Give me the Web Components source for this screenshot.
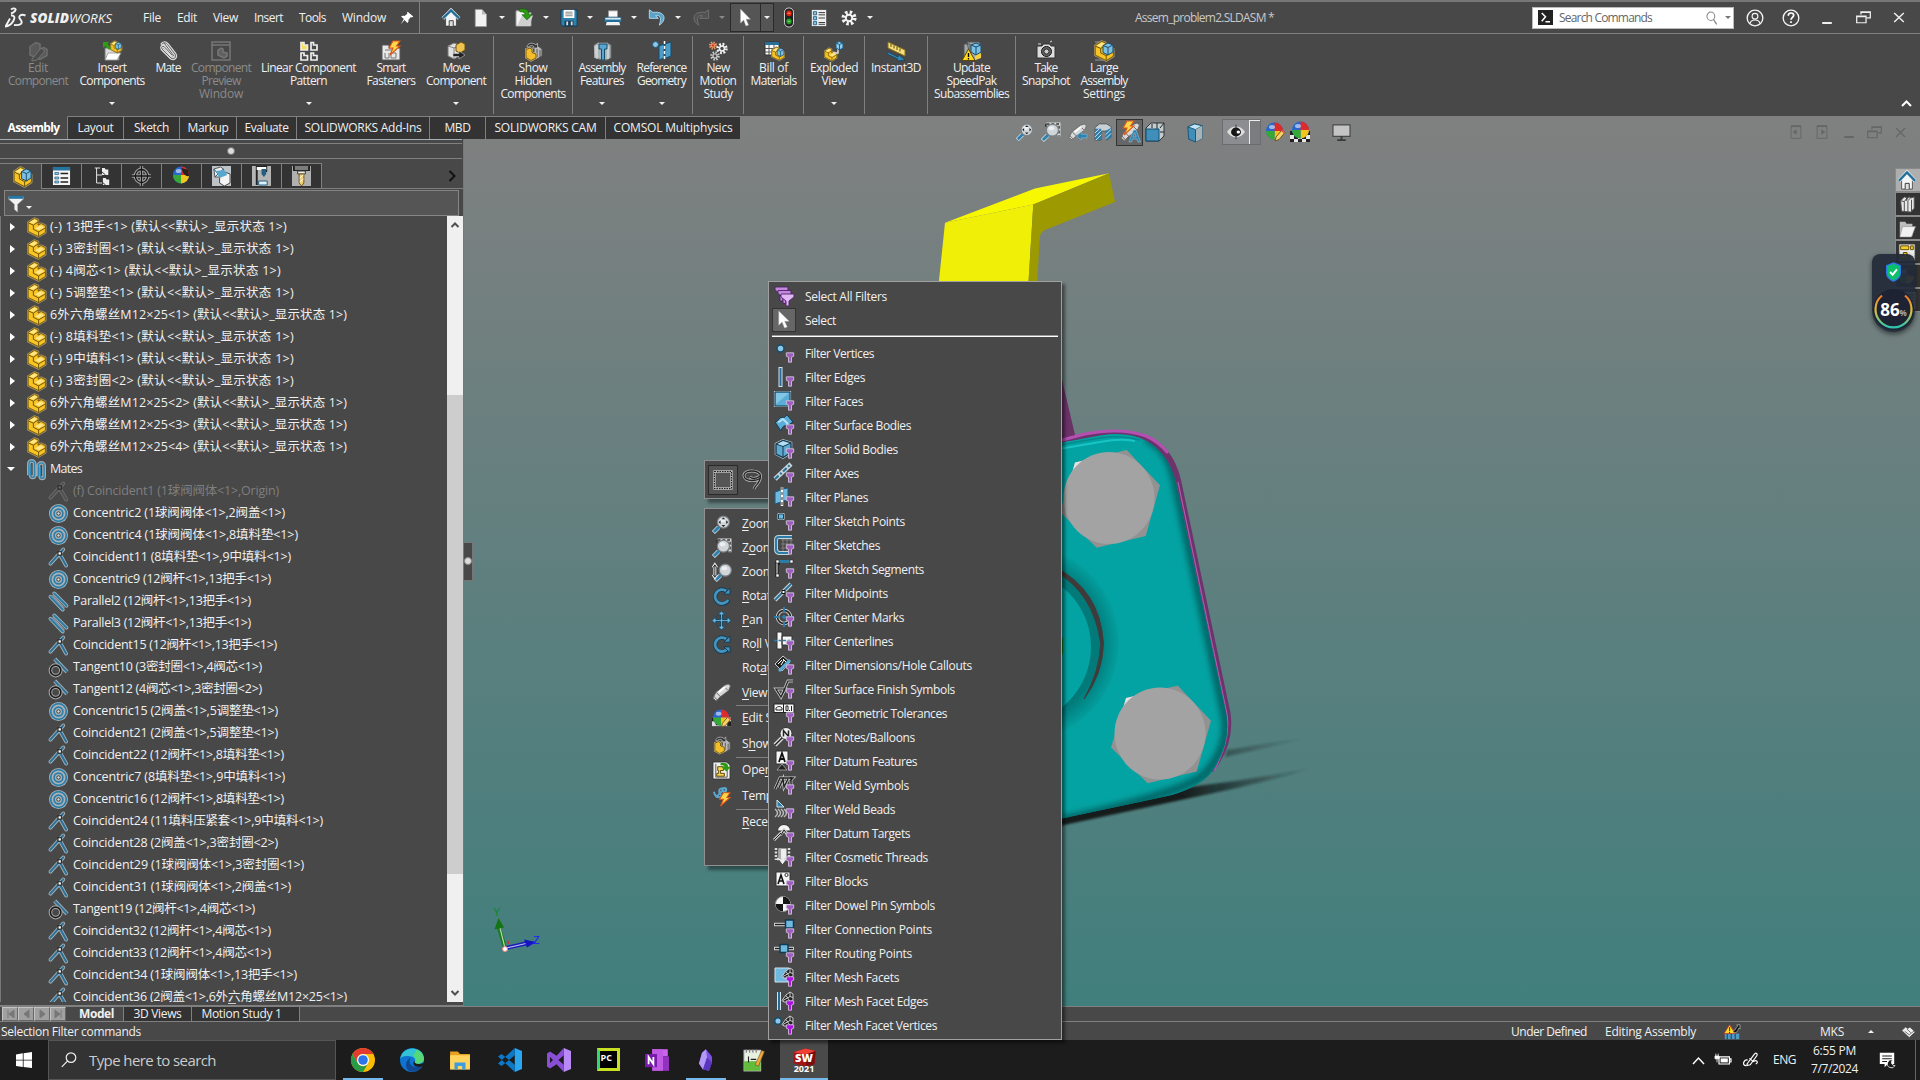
<!DOCTYPE html>
<html lang="en">
<head>
<meta charset="utf-8">
<title>SOLIDWORKS - Assem_problem2.SLDASM</title>
<style>
html,body{margin:0;height:100%;overflow:hidden;background:#484848}
body{font:12px/16px "Open Sans","Noto Sans","Noto Sans CJK SC",sans-serif;color:#f0f0f0}
</style>
</head>
<body>
<sw-app></sw-app>
<script>
const B='#2f86b4', L='#8cc8e6', D='#123a52';
const fun=(c='#a05fbe')=>`<path d="M12.3 9.800h7.400v3.400l-2.200 1v5h-3v-5l-2.200-1z" fill="${c}" stroke="#d8d0dc" stroke-width=".8"/>`;
const part=`<g transform="translate(-1 -1.300) scale(1.100)"><path d="M2 5.500 8 1.500 11.500 3v5l3-1.500 4 2v6.500L12 19 2 14z" fill="#f7c325" stroke="#a8946a" stroke-width="2.200" stroke-linejoin="round"/><path d="M2 5.500 8 1.500 11.500 3v5l3-1.500 4 2v6.500L12 19 2 14z" fill="#f7c325" stroke="#6b5200" stroke-width=".8"/><path d="M2.500 6 7 8v4l5 2.500V19M7 8l4.500-3M12 14.500l6-3.500" fill="none" stroke="#6b5200" stroke-width=".9"/><path d="M3 5.500 8 2.500l3 1.200-4 3zM8.500 11l5.500-3 3.500 2-5 3z" fill="#ffe68a"/></g>`;
const partBlue=part+`<path d="M9 4.500 14 2l5 2v7l-5 3-5-2.500z" fill="#7cc0e4" stroke="#1b4c6b"/><path d="M9 4.500l5 2 5-2.500M14 6.500V14" fill="none" stroke="#1b4c6b"/>`;
const mag=`<path d="M1.500 18.500 7 13" stroke="#d8e8f0" stroke-width="4.500"/><path d="M2 18 7.500 12.500" stroke="#2f7fae" stroke-width="3"/><circle cx="12" cy="7.500" r="6.300" fill="#cfd5d9" stroke="#7b8286" stroke-width="1.200"/><ellipse cx="11" cy="5.500" rx="3" ry="2.200" fill="#fff" opacity=".6"/>`;
const ball=`<circle cx="9.500" cy="9" r="8.500" fill="#2a66cc"/><path d="M9.500 .5A8.500 8.500 0 0 1 18 9H9.500z" fill="#dd2a2a"/><path d="M18 9a8.500 8.500 0 0 1-8.500 8.500V9z" fill="#f2c51e"/><path d="M1 9a8.500 8.500 0 0 0 8.500 8.500V9z" fill="#35a835"/><ellipse cx="7" cy="5" rx="3" ry="2" fill="#fff" opacity=".55"/>`;
const pencil=`<path d="M10 19l1-4 6-7 3 2.500-6 7z" fill="#f5d36b" stroke="#6a4d18" stroke-width=".9"/><path d="M16 9l3 2.500 1-1.300-2.800-2.500z" fill="#d55"/>`;
const bolt=(x=0,y=0)=>`<path transform="translate(${x} ${y})" d="M7 0h7l-3.500 5H14L4 14l3-7H3z" fill="#ffd84a" stroke="#d9571a" stroke-width="1.100"/>`;
const scope=`<path d="M1 16 4 10l9-7.500 4-1.500 2.500 2-2 5-9.500 7-3.500 4z" fill="#d8d8d8" stroke="#606060" stroke-width=".9"/><path d="M4.500 10l5 5M12 3l5 5M2 14l3.500 4" stroke="#666"/><path d="M7 10l7-6" stroke="#fff" stroke-width="2"/>`;
const cube=`<path d="M2 5 9 1.500 17 4v9.500L9 18.500 2 15z" fill="#5fa9d0" stroke="#b8c6cd" stroke-width="2.600"/><path d="M2 5 9 1.500 17 4v9.500L9 18.500 2 15z" fill="#5fa9d0" stroke="${D}" stroke-width="1.300"/><path d="M2 5l7 2.500L17 4 9 1.500z" fill="#b4def2" stroke="${D}"/><path d="M9 7.500v11" stroke="${D}"/>`;
const doc=`<path d="M3 .5h9l6 5.500v13.500H3z" fill="#f2f2f2" stroke="#999"/><path d="M12 1v5h5z" fill="#bbb"/>`;
const house=`<path d="M4 9v10h12V9l-6-6z" fill="#f4f4f4" stroke="#333" stroke-width=".8"/><path d="M1 10.500 10 1.500l9 9" fill="none" stroke="#e9f4fa" stroke-width="4"/><path d="M1 10.500 10 1.500l9 9" fill="none" stroke="#236d96" stroke-width="2.600"/><path d="M8 19v-6h4.500v6" fill="#ddd" stroke="#333"/>`;
const folder=`<path d="M2 3h6l1.500 2H16v13H2z" fill="#bdbdbd"/><path d="M5 8h14.500L15 19H2z" fill="#f1f1f1" stroke="#888" stroke-width=".6"/>`;
const gear=(x,y,r,c,h='#484848')=>`<circle cx="${x}" cy="${y}" r="${r}" fill="none" stroke="${c}" stroke-width="${r*.7}" stroke-dasharray="${r*.42} ${r*.365}"/><circle cx="${x}" cy="${y}" r="${r*.75}" fill="${c}"/><circle cx="${x}" cy="${y}" r="${r*.4}" fill="${h}"/>`;
const meshPart=`<path d="M8 9.500 12 4l4-3 3 2v6l-3 2H10z" fill="#222" stroke="#ddd" stroke-width=".9"/><path d="M9 9.500l7-4V1M12 4.500l4 6M16 5.500l3 1" stroke="#ddd" fill="none" stroke-width=".9"/>`;
const hide=`<g fill="#bbb" stroke="#555"><path d="M11 7l4-2 4 3v7l-5 3-3-3z"/><path d="M14 8v8M17 9v7"/></g><path d="M3 8.500 7 7l2 1.500v3l4 1.500v4l-5 2.500-5-3z" fill="#f4bd2c" stroke="#c9b98a" stroke-width="2"/><path d="M3 8.500 7 7l2 1.500v3l4 1.500v4l-5 2.500-5-3z" fill="#f4bd2c" stroke="#5f4600" stroke-width=".8"/><path d="M4 6c0-4 6-5 9-2l1.500-2v5H9.500L11 5.500C9 4 6 4.500 6 6z" fill="#333" stroke="#bbb" stroke-width=".8"/>`;
const rot=(c)=>`<path d="M17.500 13.500A7.500 7.500 0 1 1 15 4" fill="none" stroke="${D}" stroke-width="4.600"/><path d="M17 13.500A7.300 7.300 0 1 1 15 4.200" fill="none" stroke="#4593bd" stroke-width="3"/><path d="M12.500 7.500h6.500V1z" fill="#4593bd" stroke="${D}"/>${c}`;
const I={
home:house, doc,
open:`<path d="M2 3h6l2 2h7v14H2z" fill="#f4f4f4" stroke="#999"/><path d="M8 8h11l-4 11H3z" fill="#cfcfcf"/><path d="M5 1h4c4 0 6 2 6 6h3l-5 5.500L8 7h3c0-2-1-3-5-3z" fill="#2c9a12" stroke="#125a05" stroke-width=".6"/>`,
save:`<path d="M1 1h18v18H3l-2-2z" fill="#2f80ae" stroke="${D}"/><path d="M4 1h12v9H4z" fill="#fff"/><path d="M6 3.500h8M6 5.500h8M6 7.500h8" stroke="#777"/><path d="M5 13h10v6H5z" fill="#173d54"/><path d="M7 14h2v4H7zM12 14h2v4h-2z" fill="#ddd"/>`,
print:`<path d="M5 1h10v9H5z" fill="#fafafa" stroke="#999"/><path d="M1 9h18v6H1z" fill="#d5e9f4" stroke="#175272"/><path d="M1.500 12h17v3h-17z" fill="#1f6d98"/><path d="M3 15h14l1 4H2z" fill="#f2f2f2"/>`,
undo:`<path d="M1.500 1v10h10L8.500 8c5-1 7 2 4 11 8-5 8-17-7-15z" fill="#5ba2c9" stroke="#b9dff2"/>`,
redo:`<path d="M18.500 1v10h-10l3-3c-5-1-7 2-4 11-8-5-8-17 7-15z" fill="#525252" stroke="#757575"/>`,
cursor:`<path d="M5 1v15l3.500-3.500L11 19l3-1.200-2.800-6H16z" fill="#fff" stroke="#aaa" stroke-width=".5"/>`,
traffic:`<rect x="5" y="0" width="10" height="20" rx="4.500" fill="#222" stroke="#ddd"/><circle cx="10" cy="5.500" r="3" fill="#e2210c"/><circle cx="10" cy="14" r="3" fill="#1fa01f"/><path d="M8.500 5.500h3M8.500 14h3" stroke="#fff" opacity=".6"/>`,
list:`<rect x="1" y="1" width="18" height="18" fill="#eee"/><path d="M3 3h4v3.500H3zM3 8.500h4V12H3zM3 14h4v3.500H3z" fill="#8bc6e6" stroke="#1e597c"/><path d="M9.500 4h8M9.500 6.500h8M9.500 10h8M9.500 15h8M9.500 17h8" stroke="#222"/>`,
gear:gear(10,10,7,'#f4f4f4'),
pin:`<path d="M11 1l8 7-2 1.200-1.500-.5-3.500 4c.5 2 0 3-1.500 4.300L6.500 13 1 19l4.500-7.500L1.500 8C3 6.500 4.500 6.500 6.500 7.200L10.500 4 10 2.500z" fill="#fff"/>`,
editc:`<g opacity=".38"><path d="M2 5.500 8 1.500 12 3v5l4-1.500 3 2v6L12 18.500 2 14z" fill="#777" stroke="#aaa" stroke-width="1.500"/><path d="M4 18l9-11 4 3-8 9-5 1z" fill="#555" stroke="#bbb"/></g>`,
insertc:`<path d="M3 7h6l1 2h7v10H3z" fill="#ddd" stroke="#777"/><path d="M6 12h13l-4 7H3z" fill="#fff" stroke="#888" stroke-width=".7"/><g transform="translate(8 0) scale(.6)">${partBlue}</g><path d="M1 1h6L5.500 3 9 7 7 9 3.500 5 1 7z" fill="#2d9e13"/>`,
mate:`<g fill="none" stroke-linecap="round"><path d="M4 3c3-3 5 0 6 1l7 9c2 3-1 6-4 4L4 8C3 6 4 5 6 5.500l8 8.500M6 2l10 13" stroke="#ddd" stroke-width="3"/><path d="M4 3c3-3 5 0 6 1l7 9c2 3-1 6-4 4L4 8C3 6 4 5 6 5.500l8 8.500M6 2l10 13" stroke="#666" stroke-width="1"/></g>`,
preview:`<g opacity=".4" fill="none" stroke="#bbb" stroke-width="1.500"><path d="M1 1h18v18H1zM1 4h18"/><path d="M7 9l3-2 2 1v3l4 1v3l-3 2-6-3z" fill="#888"/></g>`,
linear:`<g fill="none" stroke="#eee" stroke-width="1.700"><path d="M2 1.500h3v2.500h3.500V9H2z" fill="#f6df5c"/><path d="M12 1.500h2.500V4H18v5h-6zM2 12h3v2.500h3.500V19H2zM12 12h2.500v2.500H18V19h-6z"/></g>`,
smart:`<path d="M1 4h7v3h11v12H1z" fill="#e8e8e8" stroke="#555"/><path d="M4 9h10M4 12v5h4v-5M10 12h5v5h-5z" stroke="#777" fill="none"/>${bolt(5,0)}`,
move:`<path d="M2 5 8 2l6 2v11l-6 3-6-3z" fill="#e1e1e1" stroke="#777"/><path d="M8 6v12M2 5l6 2 6-2" stroke="#888" fill="none"/><path d="M10 4l5-3 4 2v6l-5 3-4-2z" fill="#f0c34e" stroke="#6b5314"/><path d="M7 12.500h6v-2.500l6 4-6 4v-2.500H7z" fill="#222" stroke="#ddd" stroke-width=".5"/>`,
hide, asmf:`<path d="M2 4l4-2.500h9L19 4v13l-4 2h-5l-7-2z" fill="#a9b4ba" stroke="#666"/><path d="M3 5v12M5 4v14M16 5v13" stroke="#eee"/><path d="M7 3h8v5h-2.500v11h-3V8H7z" fill="#5aa5cf" stroke="#174d6c"/>`,
refg:`<path d="M7 5l5-2v14l-5 2zM13 3l6-2v14l-6 2.500z" fill="#4d9cc8" stroke="#174d6c"/><path d="M12.500 0v20" stroke="#fff" stroke-dasharray="3 2" stroke-width="1.500"/><circle cx="3.500" cy="3.500" r="3" fill="#8cc8e6" stroke="#1d587a"/>`,
motion:gear(5,4.500,3,'#f29c63','#e33')+gear(14,7.500,4.200,'#f3f3f3')+gear(7,15,3.500,'#c9c9c9'),
bom:`<path d="M1 1h14v13H1z" fill="#fff" stroke="#333"/><path d="M1 1h14v3H1z" fill="#256f9a"/><path d="M1 7.500h14M1 11h14M5 4v10M10 4v10" stroke="#555"/><g transform="translate(7 6) scale(.68)">${partBlue}</g>`,
expl:`<g transform="translate(0 7) scale(.65)">${part}</g><path d="M9 12h5V7" fill="none" stroke="#ddd" stroke-width="1.500"/><path d="M12 2l3-1.500L19 2v5l-3.500 2L12 7z" fill="#8fcbeb" stroke="#1d5c83"/><path d="M12 2l3.500 1.500L19 2M15.500 3.500V9" stroke="#1d5c83" fill="none"/>`,
i3d:`<path d="M2 1l17 8v6L2 7z" fill="#f7e07a" stroke="#8a7020"/><path d="M5 3v3M8 4.500v3M11 6v3M14 7.500v3" stroke="#5a4710"/><path d="M2 11l10 5 1-2 6 5-8 1 .8-2L1 13z" fill="#2d86b6" stroke="${D}" stroke-width=".6"/>`,
speed:`<path d="M2 3h6v13H2zM5 1h12l2 3v12l-4 3H9z" fill="#a0a8ac" stroke="#555"/><path d="M9 4l5-2 5 2v7l-5 3-5-3z" fill="#7cc0e4" stroke="#1b4c6b"/><path d="M9 4l5 2 5-2M14 6v8" fill="none" stroke="#1b4c6b"/><path d="M13 15l6-3v5l-6 2z" fill="#f6d040"/><path d="M6.500 8 13 19.500H0z" fill="#ffd91e" stroke="#5f4600"/><path d="M6.500 12v4M6.500 17v1.500" stroke="#000" stroke-width="1.400"/>`,
snap:`<path d="M1 5h5l1.500-2h6L15 5h4v12H1z" fill="#ddd" stroke="#333"/><circle cx="10.500" cy="10.500" r="5" fill="#666" stroke="#111"/><circle cx="10.500" cy="10.500" r="2.600" fill="#ccc" stroke="#222"/><path d="M2 3h3M14 1l2-1" stroke="#ddd"/>`,
large:`<path d="M1 1h11M1 19h13" stroke="#999"/>`+partBlue,
asm:partBlue, part,
tree1:`<path d="M1 1h18v18H1z" fill="#f5f5f5"/><path d="M1 1h18v3.500H1z" fill="#2674a0"/><path d="M3 6.500h4v2H3zM3 11h4v2H3zM3 15h4v2H3z" fill="#8bc6e6" stroke="#1e597c" stroke-width=".7"/><path d="M9 7.500h8M9 12h8M9 16h8" stroke="#222" stroke-width="1.300"/>`,
tree2:`<g stroke="#eee" fill="none"><path d="M2 2h6M4 2v15h6M4 9h6"/></g><path d="M10 2h3l1 1.500h3V9h-7zM11 12h3l1 1.500h3V19h-7z" fill="#eee"/><path d="M10 6l4 3M10 16l4 3" stroke="#333"/>`,
target:`<g fill="none" stroke="#a0a0a0" stroke-width="3.600"><circle cx="10" cy="10" r="6.500"/><path d="M10 0v20M0 10h20"/></g><g fill="none" stroke="#161616" stroke-width="1.300"><circle cx="10" cy="10" r="6.500"/><path d="M10 0v20M0 10h20"/></g>`,
ball:ball+`<path d="M10 2l7 2 1 6c-4 1-7-3-8-8z" fill="#222"/>`, disp:`<rect width="20" height="20" fill="#bdc3c6"/><path d="M2 3l7-2 3 2v8H3z" fill="#eee" stroke="#555"/><path d="M2 3l8 9M3 11l9-8" stroke="#1d5c83"/><path d="M8 8l5-2 6 2v9l-6 3-5-3z" fill="#f4f4f4" stroke="#444"/><path d="M4 5l9-1 3 5-8 3z" fill="#57a7cf"/>`,
cam:`<rect width="20" height="20" fill="#b4b4b4"/><path d="M5 19V1h10v5" fill="none" stroke="#222" stroke-width="2"/><path d="M5 1h10v3H5z" fill="#fff"/><path d="M10 3h5v5l-2.500 3L10 8z" fill="#235f83"/><path d="M7 15h9v4H7z" fill="#dff0f8" stroke="#235f83"/>`,
drill:`<rect width="20" height="20" fill="#b0b0b0"/><path d="M1 0h18v5H1z" fill="#222"/><path d="M3 1h14M3 3h14" stroke="#ddd"/><path d="M6 5h8v3H6z" fill="#eee" stroke="#333"/><path d="M7.500 8h5v9l-2.500 3-2.500-3z" fill="#f1cf6f" stroke="#755618"/><path d="M8 12l4-3M8 16l4-3" stroke="#fff"/>`,
filter:`<path d="M1 2h18v3l-7 6v9l-4-3v-6L1 5z" fill="#f2f2f2" stroke="#aaa" stroke-width=".7"/><path d="M1 1h18v3.500H1z" fill="#2476a3"/>`,
mates:`<g fill="none" stroke="#a4acb0" stroke-width="4"><path d="M2 16V4c0-4 6-4 6 0v12c0 3-4 3-4 0M12 17V6c0-4 6-4 6 0v11c0 3-4 3-4 0"/></g><g fill="none" stroke="#2f86b4" stroke-width="1.500"><path d="M2 16V4c0-4 6-4 6 0v12c0 3-4 3-4 0V5M12 17V6c0-4 6-4 6 0v11c0 3-4 3-4 0V7"/></g>`,
coin:`<g stroke-linecap="round"><path d="M1.500 16.500 15 1.500M11 6l7 12.500" stroke="#a9b2b7" stroke-width="4"/><path d="M1.500 16.500 15 1.500M11 6l7 12.500" stroke="#2b7299" stroke-width="2.200"/></g><rect x="9.500" y="4" width="3.500" height="3.500" fill="#fff" stroke="#111"/>`,
coinoff:`<g stroke-linecap="round"><path d="M1.500 16.500 15 1.500M11 6l7 12.500" stroke="#707070" stroke-width="4"/><path d="M1.500 16.500 15 1.500M11 6l7 12.500" stroke="#505050" stroke-width="2.200"/></g><rect x="9.500" y="4" width="3.500" height="3.500" fill="#666" stroke="#222"/>`,
conc:`<circle cx="10" cy="10" r="10" fill="#a9b2b7"/><g fill="none" stroke="#2b7da8"><circle cx="10" cy="10" r="8.200" stroke-width="1.800"/><circle cx="10" cy="10" r="4.600" stroke-width="1.800"/></g><circle cx="10" cy="10" r="1.800" fill="#ddd" stroke="#333"/>`,
par:`<g stroke-linecap="round"><path d="M1.500 5l13 13.500M5.500 1.500l13 13" stroke="#a9b2b7" stroke-width="4"/><path d="M1.500 5l13 13.500M5.500 1.500l13 13" stroke="#2b7da8" stroke-width="2.200"/><path d="M4 3.500l12 13" stroke="#ccd" stroke-width=".8"/></g>`,
tan:`<path d="M6 1l13 13.500" stroke="#a9b2b7" stroke-width="4.200"/><path d="M6 1l13 13.500" stroke="#2b7299" stroke-width="2.200"/><circle cx="7" cy="13" r="5.500" fill="none" stroke="#aaa" stroke-width="3.800"/><circle cx="7" cy="13" r="5.500" fill="none" stroke="#1d1d1d" stroke-width="1.700"/>`,
zfit:mag+`<path d="M12 2.500l2 2h-4zM12 12.500l2-2h-4zM7 7.500l2-2v4zM17 7.500l-2-2v4z" fill="#222"/>`,
zarea:`<path d="M6 1h13v13" fill="none" stroke="#ddd" stroke-width="3"/><path d="M6 1h13v13M5 1v3" fill="none" stroke="#333" stroke-width="1.500" stroke-dasharray="3 2"/>`+mag,
zio:`<g transform="translate(2 0)">${mag}</g><path d="M3 3v11M1 5l2-3 2 3M1 12l2 3 2-3" fill="none" stroke="#eee" stroke-width="3"/><path d="M3 2v12M1 5l2-3 2 3M1 12l2 3 2-3" fill="none" stroke="#222"/>`,
rot:rot(''), roll:rot(`<path d="M12.500 12.500h6.500V19z" fill="#4593bd" stroke="${D}"/>`),
pan:`<path d="M10 0l4 4h-3v5h5V6l4 4-4 4v-3h-5v5h3l-4 4-4-4h3v-5H4v3l-4-4 4-4v3h5V4H6z" fill="#6ab4dc" stroke="#12435f"/>`,
scope, prev:scope+`<path d="M9 14.500l5-4.500v2.500h6v4h-6v2.500z" fill="#2e83b3" stroke="#8fcbeb" stroke-width=".5"/>`,
sect:`<path d="M1 5l5-4h8l5 3v12l-5 3V9H8v10H1z" fill="#c6d0d5" stroke="#555"/><path d="M1 6.500h7V19H1zM13 8.500l6-3V16l-6 3z" fill="#2d7ba7"/><path d="M1 11l5-4.500M1 15.500l7-7M2 19l6-6M13 13l6-6M13 17.500l6-6" stroke="#e4f2fa"/>`,
dyn:scope+bolt(0,-1)+`<path d="M9 20 13.500 8h2.500l4.500 12h-2.500l-1-3h-4.500l-1 3zM13 15h3.200l-1.500-4.500z" fill="#2e83b3" stroke="#9bd2ef" stroke-width=".5"/>`,
orient:`<path d="M1 6l5-5h13v13l-5 5H1z" fill="#c2ccd1" stroke="#333"/><path d="M7 2v4M12 1v8M15 6l4-5M15 10h4" stroke="#222" fill="none"/><path d="M1 7h13v12H1z" fill="#3f8fba" stroke="#174d6c"/>`,
dstyle:`<path d="M1 4l8-3 9 2v13l-8 4-8-3z" fill="#3f8fba" stroke="#1c4f6d"/><path d="M1 4l9 3 8-4-9-2z" fill="#c0e4f5" stroke="#1c4f6d"/><path d="M10 7l8-4v13l-8 4z" fill="#a8b3b8"/><path d="M10 7v13" stroke="#1c4f6d"/>`,
eye:`<path d="M0 10c5-9 15-9 20 0-5 9-15 9-20 0z" fill="#ddd"/><circle cx="10" cy="10" r="5.500" fill="#151515"/><circle cx="12.500" cy="10" r="2" fill="#fff"/><path d="M10 1v18" stroke="#222"/>`,
app:ball+pencil, scene:`<path d="M0 9h20v11H0z" fill="#e8e8e8"/><path d="M0 9h4v4H0zM16 9h4v4h-4zM4 13h4v4H4zM12 13h4v4h-4zM0 17h4v3H0zM8 17h4v3H8zM16 17h4v3h-4z" fill="#222"/><g transform="translate(1 -1)">${ball}</g>`,
scenep:`<path d="M0 9h20v9H0z" fill="#ddd"/><path d="M0 9h4v4H0zM16 13h4v5h-4zM4 13h4v4H4z" fill="#222"/>`+ball+pencil,
mon:`<path d="M1 2h18v12H1z" fill="#c4c4c4" stroke="#4a4a4a" stroke-width="1.300"/><path d="M9 14v3H5.500v2h9v-2H11v-3z" fill="#3a3a3a"/>`,
box:`<path d="M1.500 1.500h17v17h-17z" fill="none" stroke="#bbb" stroke-width="2.400"/><path d="M1.500 1.500h17v17h-17z" fill="none" stroke="#222" stroke-width="1.100" stroke-dasharray="1.500 1"/>`,
lasso:`<g fill="none"><path d="M18.500 6c0 3-4 4.500-9 4.500S1 8.500 1 5.500s4-4.500 8.500-4.500 9 2 9 5zM18.500 6c0 7-5 8-7 13M18 6c-4 3-8 3-11 1" stroke="#b5b5b5" stroke-width="3"/><path d="M18.500 6c0 3-4 4.500-9 4.500S1 8.500 1 5.500s4-4.500 8.500-4.500 9 2 9 5zM18.500 6c0 7-5 8-7 13M18 6c-4 3-8 3-11 1" stroke="#222" stroke-width="1.300"/></g>`,
openp:`<path d="M1 1h14l4 3v15H1z" fill="#efefef" stroke="#333"/><path d="M4 3v14h12V8" fill="none" stroke="#555"/><path d="M6 6h6v4h-3v3h4v3H5v-3h2v-3H6z" fill="#f5d34e" stroke="#5f4600"/><path d="M9 2h4c3 0 4 2 4 4h3l-5 5-5-5h3c0-1-1-1.500-4-1.500z" fill="#2c9a12"/>`,
temp:`<g fill="none" stroke="#5ba8d0" stroke-width="2"><path d="M12 2C6 0 7 7 10 8M2 5c2 8 9 8 13-3M4 11l8-8"/><circle cx="13" cy="3" r="2"/></g>${bolt(5,6)}`,
allf:`<g fill="#c486e0" stroke="#4b2462" stroke-width=".9"><path d="M1 1h13v3L9 8v7H6V8L1 4z"/><path d="M4 4.500h13v3l-5 4v6H9v-6L4 7.500z"/><path d="M7 8h13v3l-5 4v5h-3v-5L7 11z" fill="#e2b6f3"/></g>`,
ver:`<circle cx="6.500" cy="5.500" r="3.500" fill="${L}" stroke="#174d6c" stroke-width="1.500"/>`+fun(),
edg:`<path d="M6.500 0v20" stroke="#cfe3ee" stroke-width="4"/><path d="M6.500 1v18" stroke="#256d98" stroke-width="2"/>`+fun(),
fac:`<path d="M1 1h15v14H1z" fill="#5badd6" stroke="#aebcc4" stroke-width="2.200"/><path d="M1 1h15v14H1z" fill="#5badd6" stroke="${D}"/><path d="M2 2h13L2 13z" fill="#a3daf3" opacity=".55"/>`+fun(),
sur:`<path d="M1 7c3 0 4-4 6-5 2 2 4 0 6-2l6 7c-3 1-4 4-6 4-3-1-5 1-6 5z" fill="#5badd6" stroke="${D}"/><path d="M4 7c3 0 4-3 5-3l5 5" fill="none" stroke="#b5e2f6" stroke-width="2"/>`+fun(),
sol:cube+fun(), axe:`<path d="M1 16 17 1" stroke="#c8d5db" stroke-width="4.500"/><path d="M1 16 17 1" stroke="#2b7299" stroke-width="2.200" stroke-dasharray="5 2 2 2"/>`+fun(),
pla:`<path d="M1 5l6-2v12l-6 2zM9 2l5-1v12l-5 1z" fill="#6db9df" stroke="#1d587a"/><path d="M8 0v19" stroke="#fff" stroke-width="2.500"/><path d="M8 0v19" stroke="#222" stroke-dasharray="3 2"/>`+fun(),
skp:`<path d="M4 2.500h6v6H4z" fill="#6db9df" stroke="#ddd"/><path d="M4.500 3h5v5h-5z" fill="none" stroke="#16425d"/>`+fun(),
ske:`<path d="M7 5h12M7 9h12M7 13h12M9 3v14M13 3v14M17 3v14" stroke="#888" stroke-width=".8"/><path d="M18 2H5Q2 2 2 5v9q0 4 4 4h9" fill="none" stroke="#c8d5db" stroke-width="4"/><path d="M18 2H5Q2 2 2 5v9q0 4 4 4h9" fill="none" stroke="#2b7da8" stroke-width="2.200"/>`+fun(),
seg:`<path d="M3 18V4h3" fill="none" stroke="#111" stroke-width="3"/><path d="M3 18V4" fill="none" stroke="#ddd" stroke-width="1.200"/><path d="M5 2.500h13" stroke="#2b7da8" stroke-width="3"/><path d="M2 1h3v3H2zM16 1h3v3h-3zM2 15h3v3H2z" fill="#fff" stroke="#222" stroke-width=".6"/>`+fun(),
mid:`<path d="M1 17 17 1" stroke="#c8d5db" stroke-width="4"/><path d="M1 17 17 1" stroke="#2b7299" stroke-width="2"/><path d="M8 7.500h3v3H8z" fill="#fff" stroke="#111"/>`+fun(),
cen:`<circle cx="10" cy="10" r="6.500" fill="none" stroke="#ccc" stroke-width="3.500"/><circle cx="10" cy="10" r="6.500" fill="none" stroke="#222" stroke-width="1.500"/><path d="M10 0v5M10 15v5M0 10h5M15 10h5M8 10h4M10 8v4" stroke="#2b7da8" stroke-width="2"/>`+fun(),
cli:`<path d="M3 1h5v17H3zM8 5h10v9H8z" fill="#f6f6f6" stroke="#333"/><path d="M0 9.500h20" stroke="#2b7da8" stroke-width="1.500" stroke-dasharray="3 1.500"/>`+fun(),
dim:`<path d="M1 9 9 1l7 6-8 9z" fill="#222" stroke="#ccc"/><path d="M4 9l4-4M7 10l3-5M9 4l3 3" stroke="#fff"/><path d="M5 16 16 5" stroke="#5badd6" stroke-width="3"/>`+fun(),
sfs:`<path d="M2 10h9l-4 8zM7 18 14 2h5" fill="none" stroke="#c0c0c0" stroke-width="3"/><path d="M2 10h9l-4 8zM7 18 14 2h5" fill="none" stroke="#222" stroke-width="1.200"/>`+fun(),
geo:`<path d="M0 1h20v8.500H0z" fill="#f6f6f6" stroke="#222"/><path d="M9.500 1v8M2 7h6V5c-2-2-4-2-6 0zM12 3h2v4.500h-2zM17.500 3v5M15.500 7v1" stroke="#222" fill="none"/>`+fun(),
not:`<path d="M1 18l8-8" stroke="#ddd" stroke-width="4"/><path d="M1 18l8-8" stroke="#222" stroke-width="1.500"/><circle cx="12" cy="6.500" r="6" fill="#eee" stroke="#333"/><path d="M9.500 9.500v-6l5 6v-6" fill="none" stroke="#222" stroke-width="1.500"/>`+fun(),
dat:`<path d="M2 0h12v13H2z" fill="#f6f6f6" stroke="#333"/><path d="M5 11l3-9 3 9M6 8h4" fill="none" stroke="#111" stroke-width="1.800"/><path d="M8 13l5 6H3z" fill="#222" stroke="#bbb" stroke-width=".7"/>`+fun(),
wel:`<path d="M1 14 6 3h13l-3 3M5 13l4-9 1 8 4-8M17 2v8" fill="none" stroke="#ccc" stroke-width="2.800"/><path d="M1 14 6 3h13l-3 3M5 13l4-9 1 8 4-8M17 2v8" fill="none" stroke="#222" stroke-width="1.400"/>`+fun(),
bea:`<path d="M3 1v7h7z" fill="#2b7da8" stroke="#cfe6f2"/><g fill="none" stroke="#bbb" stroke-width="1.500"><path d="M1 10q5 4 0 8M4 10q5 4 0 8M7 10q5 4 0 8M10 10q5 4 0 8"/></g>`+fun(),
dta:`<path d="M3.500 8a6.500 6.500 0 0 1 13 0z" fill="#f4f4f4" stroke="#333"/><path d="M0 17l7-7M6 12l4-5 4 5" stroke="#ccc" stroke-width="3" fill="none"/><path d="M0 17l7-7M7 12l3-5 4 5" stroke="#222" fill="none"/>`+fun(),
cos:`<path d="M4 1h9v11l-4.500 6L4 12z" fill="#eee" stroke="#444"/><path d="M2 1v12M15 1v9M3 12h12" stroke="#ddd" stroke-width="2.500" stroke-dasharray="2 1.500"/><path d="M6 1v11" stroke="#aaa" stroke-width="2"/>`+fun(),
blo:`<path d="M2 1h14v14H2z" fill="#f6f6f6" stroke="#333"/><path d="M4 13l3-9 3 9M5 10h4" fill="none" stroke="#111" stroke-width="1.600"/><circle cx="12.500" cy="4" r="1.600" fill="none" stroke="#333"/>`+fun(),
dow:`<circle cx="9" cy="9" r="7.500" fill="#f6f6f6" stroke="#999"/><path d="M9 1.500V9H1.500A7.500 7.500 0 0 0 9 16.500V9h7.500A7.500 7.500 0 0 0 9 1.500z" fill="#f6f6f6"/><path d="M9 9V1.500A7.500 7.500 0 0 1 16.500 9zM9 9v7.500A7.500 7.500 0 0 1 1.500 9z" fill="#161616"/>`+fun(),
con:`<path d="M0 5.500h11" stroke="#ccc" stroke-width="3.500"/><path d="M1 5.500h10" stroke="#222" stroke-width="1.300"/><path d="M11.500 1h8v8h-8z" fill="#6db9df" stroke="${D}" stroke-width="1.500"/>`+fun(),
rou:`<path d="M0 5.500h20" stroke="#ccc" stroke-width="3.500"/><path d="M1 5.500h18" stroke="#222" stroke-width="1.300"/><path d="M6 1.500h8v8H6z" fill="#6db9df" stroke="${D}" stroke-width="1.500"/>`+fun(),
mfa:`<path d="M1 1h14v14H1z" fill="#6db9df" stroke="#cfe3ee"/>`+meshPart+fun('#b012e6'),
med:`<path d="M5 1v18" stroke="#cfe3ee" stroke-width="4"/><path d="M5 1v18" stroke="#256d98" stroke-width="2"/>`+meshPart+fun('#b012e6'),
mve:`<circle cx="4" cy="6" r="3.300" fill="${L}" stroke="#174d6c" stroke-width="1.500"/>`+meshPart+fun('#b012e6'),
lib:`<path d="M3 6l4-4 3 1-1 3 3-4 3 1 3-1v12l-4 4-10-1z" fill="#e8e8e8" stroke="#555"/><path d="M7 7v12M11 6v13M15 5v12M3 6l4 1 3-4M11 6l4-4" stroke="#444" fill="none"/>`,
folder, pal:`<rect x="1" y="1" width="18" height="18" fill="#eee" stroke="#333"/><path d="M3 3h9v4H3zM14 3h3v4h-3zM6 10h4v3h3v4H3v-4h3z" fill="#f6cf28" stroke="#5f4600"/>`,
user:`<circle cx="10" cy="10" r="8.700" fill="none" stroke="#f4f4f4" stroke-width="1.500"/><circle cx="10" cy="8" r="3.200" fill="none" stroke="#f4f4f4" stroke-width="1.300"/><path d="M4.500 16c1-5 10-5 11 0" fill="none" stroke="#f4f4f4" stroke-width="1.300"/>`,
help:`<circle cx="10" cy="10" r="8.700" fill="none" stroke="#f4f4f4" stroke-width="1.500"/><path d="M7 7.500c0-4 6-4 6-.5 0 2-3 2.500-3 5M10 13.500v2" fill="none" stroke="#fff" stroke-width="1.900"/>`,
min:`<path d="M4 15h12v2.500H4z" fill="currentColor"/>`,
rest:`<path d="M7 6V2.500h11v8h-4M2 8h11v9H2zM7 3.300h11M2 8.800h11" fill="none" stroke="currentColor" stroke-width="1.500"/>`,
x:`<path d="M4 4l12 12M16 4 4 16" stroke="currentColor" stroke-width="1.800"/>`,
dl:`<path d="M3 1h14v18H3z" fill="none" stroke="#666" stroke-width="1.400"/><path d="M3 2h14" stroke="#666" stroke-width="2"/><path d="M11 6v8l-6-4z" fill="#666"/>`,
dr:`<path d="M3 1h14v18H3z" fill="none" stroke="#666" stroke-width="1.400"/><path d="M3 2h14" stroke="#666" stroke-width="2"/><path d="M9 6v8l6-4z" fill="#666"/>`,
cmd:`<rect width="20" height="20" fill="#222"/><path d="M5 4l5 5-5 6M10 15.500h6" stroke="#fff" stroke-width="2" fill="none"/>`,
smag:`<circle cx="9" cy="7.500" r="6" fill="none" stroke="#888" stroke-width="1.600"/><path d="M13 12l5 7" stroke="#888" stroke-width="2"/>`,
tmag:`<circle cx="12.500" cy="7" r="6" fill="none" stroke="#f0f0f0" stroke-width="1.500"/><path d="M8 11.500 1 18.500" stroke="#f0f0f0" stroke-width="1.500"/>`,
win:`<path d="M0 3l8.500-1.300v8H0zM9.500 1.500 20 0v9.700H9.500zM0 10.700h8.500v8L0 17.500zM9.500 10.700H20V20L9.500 18.700z" fill="#fff"/>`,
chrome:`<circle cx="10" cy="10" r="10" fill="#fbbc05"/><path d="M1.300 5A10 10 0 0 1 18.700 5H10a5 5 0 0 0-4.500 7.500z" fill="#e33b2e"/><path d="M1.300 5A10 10 0 0 0 10 20l4.400-7.500A5 5 0 0 1 5.600 12.500z" fill="#279b48"/><circle cx="10" cy="10" r="5" fill="#fff"/><circle cx="10" cy="10" r="4" fill="#2b74ea"/>`,
edge:`<circle cx="10" cy="10" r="10" fill="#0d74d1"/><path d="M.2 9C2-3 20-2 20 9c0 4-5 5-8 3.500 1-2 1-5-3-5.500C5 6 1 7 .2 9z" fill="#32c2d5"/><path d="M14 1.500c5 2 6 6 6 8-1 4-6 4-8 3 2-2 1-5-1-6z" fill="#56d878"/><path d="M9 8c-3 5 1 10 10 7-5 7-14 6-14-1 0-3 2-5 4-6z" fill="#12488f"/><path d="M12 10.500c-.5 3 3 4 8.500 1.500l-1.200 3C15 17 9 15 12 10.500z" fill="#1c1c1c"/>`,
expl2:`<path d="M1 3h7l2 2h9v12H1z" fill="#e7a220"/><path d="M1 6h18v12H1z" fill="#ffd560"/><path d="M5 18v-6h10v6h-3v-3H8v3z" fill="#3d9be0"/>`,
vsc:`<path d="M14 0l6 2.500v15L14 20z" fill="#2aa6ef"/><path d="M14 0v6L3 15 0 13z M14 20v-6L3 5 0 7z" fill="#0b79c8"/>`,
vs:`<path d="M14 0l6 2.500v15L14 20z" fill="#b98af5"/><path fill-rule="evenodd" d="M14 0v20L8 13.500 2.500 17 0 15.500v-11L2.500 3 8 6.500zM2.500 7.500v5L5 10zM14 6l-4.500 4 4.500 4z" fill="#8a4fd6"/>`,
onen:`<path d="M6 1h13v6H6z" fill="#ca64ea"/><path d="M6 7h14v12H6z" fill="#9332bf"/><path d="M6 1h9v18H6z" fill="#c15be4"/><rect y="5" width="10" height="11" fill="#7719aa"/><path d="M3 13.500V7.500l4 6v-6" fill="none" stroke="#fff" stroke-width="1.500"/>`,
obs:`<path d="M10 1l6 6v5l-3 7-6-1-4-5 3-9z" fill="#7a50e0"/><path d="M10 1l1 7-4 10-4-5 3-9z" fill="#b49af7"/><path d="M11 8l5 4-3 7-6-1z" fill="#5a35bd"/>`,
npp:`<rect x="1" y="2" width="15" height="17" fill="#e8f1e0" stroke="#ccc"/><path d="M1 11h15v8H1z" fill="#63bb3c"/><path d="M3 1v3M6 1v3M9 1v3M12 1v3" stroke="#777"/><path d="M5 7v5M7 9.500h5" stroke="#222"/><path d="M11 14l6-12 2.500 1L14 15z" fill="#f2a93b" stroke="#6a4d18" stroke-width=".5"/>`,
batt:`<path d="M5 6h13v9H5zM18 8.500h2v4h-2" fill="none" stroke="#fff" stroke-width="1.500"/><path d="M7 8h9v5H7z" fill="#fff"/><path d="M0 5h5v3.500H0zM1 2v3M4 2v3M2.500 8v5" stroke="#fff" fill="#fff"/>`,
pen:`<path d="M5 15 14 3c2-3 5-1 3 2L9 16l-4 1zM6 10c-5-1-8 7-2 7M8 8l5 4c4-3 7 1 3 3" fill="none" stroke="#fff" stroke-width="1.500"/>`,
notif:`<path d="M1 1h18v14h-8l-4 4v-4H1z" fill="#fff"/><path d="M4 5h12M4 8.500h12M4 12h6" stroke="#1c1c1c" stroke-width="1.300"/><path d="M17 10a5 5 0 1 0 3 7 4 4 0 0 1-3-7z" fill="#1c1c1c" stroke="#fff"/>`,
stat:`<path d="M1 12h18v7H1z" fill="#4c9ac5"/><path d="M4 12v7M9 12v7M14 12v7" stroke="#123"/><path d="M7 1l7 11H0z" fill="#ffd91e" stroke="#b33"/><path d="M7 4v5M7 10v1.500" stroke="#000"/><path d="M11 8c5 0 3-4 6-5l-1-2h4v5l-1.500-1C17 7 18 11 12 11z" fill="#111" stroke="#ccc" stroke-width=".8"/>`,
tag:`<path d="M1 8l5-5 3 2 3-2 7 7-8 8z" fill="#eee" stroke="#444"/><path d="M5 9l6 5 7-6M8 6l5 5" stroke="#444" fill="none"/>`,
shield:`<path d="M10 0l8 3v8c0 4-3 7-8 9-5-2-8-5-8-9V3z" fill="#0bbf6b" stroke="#2d7be8" stroke-width="1.600"/><path d="M6 10l3 3 5-6" fill="none" stroke="#fff" stroke-width="2.200"/>`,
swc:`<path d="M2 3.500 11 .5l8 2-1 11-7 2L2 13z" fill="#a31414"/><path d="M2 3.500 11 .5l8 2-7.500 3z" fill="#ef4038"/><path d="M11.500 5.500 19 2.500l-1 11-6.500 2z" fill="#7d0d0d"/>`
};
const def=(n,html,after)=>customElements.define(n,class extends HTMLElement{
  connectedCallback(){ if(this.shadowRoot)return; this.attachShadow({mode:'open'}).innerHTML=typeof html==='function'?html(this):html; after&&after(this); }
});
const ic=(n,s=20,h=s,st='')=>`<sw-icon name="${n}" s="${s}" h="${h}" style="${st}"></sw-icon>`;
const t=(w,s,st='')=>`<fit-text w="${w}" style="${st}">${s}</fit-text>`;
const gap=w=>`<i style="flex:none;display:block;width:${w}px"></i>`;
const esc=s=>s.replace(/</g,'&lt;').replace(/>/g,'&gt;');

/* Vector icon drawn in a 20x20 box */
def('sw-icon',e=>`<style>:host{display:block;flex:none;width:${e.getAttribute('s')}px;height:${e.getAttribute('h')}px}svg{display:block;width:100%;height:100%;overflow:visible}</style><svg viewBox="0 0 20 20" preserveAspectRatio="none">${I[e.getAttribute('name')]||''}</svg>`);

/* Text run whose tracking is adjusted to a given width */
def('fit-text',`<style>:host{display:block;flex:none;white-space:pre}span{display:inline-block}</style><span><slot></slot></span>`,e=>{
  const w=+e.getAttribute('w'),s=e.shadowRoot.querySelector('span');
  if(!w)return; const cur=s.getBoundingClientRect().width,n=e.textContent.length;
  if(cur)s.style.letterSpacing=((w-cur)/n)+'px'; e.style.width=w+'px';
});
def('drop-arrow',e=>`<style>:host{display:block;flex:none;width:0;height:0;border:3px solid transparent;border-top:3px solid ${e.getAttribute('c')||'#f2f2f2'};border-bottom:0}</style>`);

const menus=[['File',143,18],['Edit',177,20],['View',213,25],['Insert',254,29],['Tools',299,27],['Window',342,44]];
/* lays items [x, width, html] along one flex row by the gaps between them */
const row=(items,from=0)=>{let x=from;return items.map(([a,w,h])=>{const g=gap(a-x);x=a+w;return g+h}).join('')};
def('title-bar',()=>`<style>:host{display:flex;height:34px;box-sizing:border-box;align-items:center;border-top:2px solid #777;border-bottom:1px solid #808080;background:#484848}
.sel{flex:none;box-sizing:border-box;width:44px;height:29px;border:1px solid #2a2a2a;background:#555;display:flex;align-items:center}.sel b{width:30px;height:100%;box-sizing:border-box;border-right:1px solid #2a2a2a;display:flex;align-items:center;padding-left:5px}.sel b+*{margin-left:3px}
.s{flex:none;box-sizing:border-box;width:202px;height:22px;background:#fff;border:1px solid #bbb;display:flex;align-items:center;color:#666}.v{flex:none;width:1px;height:31px;background:#808080}</style>
${row([[5,22,`<svg width="22" height="22" viewBox="0 0 22 22" style="flex:none"><path d="M6 2.500c3-2 6-1 4 1.500-1 1-2 2-4 2.500M6 8.500c7-1 2 10-5.500 11l4.500-8M20.500 8.500c-5-2-8 1-5 4 3 4 0 6-6.500 5.500" fill="none" stroke="#f2f2f2" stroke-width="1.900"/></svg>`],
[30,39,t(39,'SOLID','font-size:13.500px;font-style:italic;font-weight:800')],[69,43,t(43,'WORKS','font-size:13.500px;font-style:italic')],
...menus.map(([s,x,w])=>[x,w,t(w,s)]),[400,14,ic('pin',14)],[419,1,'<i class="v"></i>'],[442,18,ic('home',18)],[473,15,ic('doc',15,18)],[499,6,'<drop-arrow></drop-arrow>'],[514,20,ic('open',20,19)],[543,6,'<drop-arrow></drop-arrow>'],[560,18,ic('save',18)],[587,6,'<drop-arrow></drop-arrow>'],[604,18,ic('print',18,16)],[631,6,'<drop-arrow></drop-arrow>'],[648,18,ic('undo',18,17)],[675,6,'<drop-arrow></drop-arrow>'],[692,18,ic('redo',18,17)],[719,6,'<drop-arrow c="#888"></drop-arrow>'],
[730,44,`<div class="sel"><b>${ic('cursor',18,19)}</b><drop-arrow></drop-arrow></div>`],[780,18,ic('traffic',18,19)],[811,16,ic('list',16,18)],[841,16,ic('gear',16)],[867,6,'<drop-arrow></drop-arrow>'],
[1135,139,t(139,'Assem_problem2.SLDASM *','color:#c8c8c8')],
[1532,202,`<div class="s">${gap(5)}${ic('cmd',15)}${gap(6)}${t(93,'Search Commands')}${gap(53)}${ic('smag',13,14)}${gap(7)}<drop-arrow c="#777"></drop-arrow></div>`],
[1746,18,ic('user',18)],[1782,18,ic('help',18)],[1819,16,ic('min',16)],[1855,17,ic('rest',17,15)],[1891,16,ic('x',16,15)]])}`);

const W={Edit:20,Component:60,Insert:29,Components:65,Mate:25,Preview:39,Window:44,'Linear Component':95,Pattern:37,Smart:29,Fasteners:49,Move:27,Show:29,Hidden:37,Assembly:47,Features:44,Reference:50,Geometry:49,New:23,Motion:37,Study:29,'Bill of':29,Materials:46,Exploded:48,View:25,Instant3D:50,Update:37,SpeedPak:50,Subassemblies:75,Take:23,Snapshot:48,Large:28,Settings:42};
const rb=[['editc','Edit|Component',76,0,1],['insertc','Insert|Components',72,1],['mate','Mate',40],['preview','Component|Preview|Window',66,0,1],['linear','Linear Component|Pattern',109,1],['smart','Smart|Fasteners',56],['move','Move|Component',74,1],0,['hide','Show|Hidden|Components',78],0,['asmf','Assembly|Features',58,1],['refg','Reference|Geometry',61,1],0,['motion','New|Motion|Study',50],0,['bom','Bill of|Materials',59],0,['expl','Exploded|View',60,1],0,['i3d','Instant3D',62],0,['speed','Update|SpeedPak|Subassemblies',87],0,['snap','Take|Snapshot',60],['large','Large|Assembly|Settings',56]];
def('ribbon-item',e=>{const off=e.hasAttribute('off');return `<style>:host{display:flex;flex:none;flex-direction:column;align-items:center;box-sizing:border-box;padding-top:7px;height:82px;line-height:13px;color:${off?'#8b8b8b':'#f0f0f0'}}.x{height:39px;margin-bottom:2px;display:flex;flex-direction:column;align-items:center}</style>${ic(e.getAttribute('icon'),20)}<div class="x">${e.getAttribute('label').split('|').map(s=>t(W[s],s)).join('')}</div>${e.hasAttribute('drop')?'<drop-arrow></drop-arrow>':''}`});
def('ribbon-bar',()=>`<style>:host{display:flex;height:82px;background:#484848;padding-right:8px}.sep{flex:none;width:1px;height:78px;margin-top:2px;background:#808080}.c{margin:66px 0 0 auto}</style>${rb.map(r=>r?`<ribbon-item icon="${r[0]}" label="${r[1]}" style="width:${r[2]}px" ${r[3]?'drop':''} ${r[4]?'off':''}></ribbon-item>`:'<i class="sep"></i>').join('')}<svg class="c" width="11" height="7"><path d="M1 6l4.500-4.500L10 6" stroke="#fff" stroke-width="2" fill="none"/></svg>`);

def('command-tabs',()=>`<style>:host{display:flex;height:23px;box-sizing:border-box}div{box-sizing:border-box;background:#333;border-top:1px solid #808080;border-right:1px solid #808080;display:flex;justify-content:center;align-items:center;height:23px}div:first-of-type{background:#484848;border-top-color:#484848;font-weight:700;color:#fff}</style>${[['Assembly',68,52],['Layout',56,36],['Sketch',56,35],['Markup',57,41],['Evaluate',60,44],['SOLIDWORKS Add-Ins',133,117],['MBD',56,26],['SOLIDWORKS CAM',120,102],['COMSOL Multiphysics',135,119]].map(a=>`<div style="width:${a[1]}px">${t(a[2],a[0])}</div>`).join('')}`);

const st='(默认<<默认>_显示状态 1>)';
const tree=[['p','(-) 13把手<1> '+st,287],['p','(-) 3密封圈<1> '+st,294],['p','(-) 4阀芯<1> '+st,281],['p','(-) 5调整垫<1> '+st,294],['p','6外六角螺丝M12×25<1> '+st,347],['p','(-) 8填料垫<1> '+st,294],['p','(-) 9中填料<1> '+st,294],['p','(-) 3密封圈<2> '+st,294],['p','6外六角螺丝M12×25<2> '+st,347],['p','6外六角螺丝M12×25<3> '+st,347],['p','6外六角螺丝M12×25<4> '+st,347],['m','Mates',82],
['coinoff','(f) Coincident1 (1球阀阀体<1>,Origin)',279],['conc','Concentric2 (1球阀阀体<1>,2阀盖<1>)',285],['conc','Concentric4 (1球阀阀体<1>,8填料垫<1>)',298],['coin','Coincident11 (8填料垫<1>,9中填料<1>)',291],['conc','Concentric9 (12阀杆<1>,13把手<1>)',271],['par','Parallel2 (12阀杆<1>,13把手<1>)',251],['par','Parallel3 (12阀杆<1>,13把手<1>)',251],['coin','Coincident15 (12阀杆<1>,13把手<1>)',277],['tan','Tangent10 (3密封圈<1>,4阀芯<1>)',262],['tan','Tangent12 (4阀芯<1>,3密封圈<2>)',262],['conc','Concentric15 (2阀盖<1>,5调整垫<1>)',278],['coin','Coincident21 (2阀盖<1>,5调整垫<1>)',278],['coin','Coincident22 (12阀杆<1>,8填料垫<1>)',284],['conc','Concentric7 (8填料垫<1>,9中填料<1>)',285],['conc','Concentric16 (12阀杆<1>,8填料垫<1>)',284],['coin','Coincident24 (11填料压紧套<1>,9中填料<1>)',323],['coin','Coincident28 (2阀盖<1>,3密封圈<2>)',278],['coin','Coincident29 (1球阀阀体<1>,3密封圈<1>)',304],['coin','Coincident31 (1球阀阀体<1>,2阀盖<1>)',291],['tan','Tangent19 (12阀杆<1>,4阀芯<1>)',255],['coin','Coincident32 (12阀杆<1>,4阀芯<1>)',271],['coin','Coincident33 (12阀杆<1>,4阀芯<1>)',271],['coin','Coincident34 (1球阀阀体<1>,13把手<1>)',297],['coin','Coincident36 (2阀盖<1>,6外六角螺丝M12×25<1>)',347]];
def('tree-row',e=>{const k=e.getAttribute('kind'),end=+e.getAttribute('end'),s=esc(e.getAttribute('label')),top=k=='p'||k=='m',tx=top?50:73;
return `<style>:host{display:flex;align-items:center;height:22px;font-size:12.500px;line-height:22px;${k=='coinoff'?'color:#7f7f7f':''}}</style>${top?gap(k=='p'?9:7)+`<svg width="${k=='p'?7:9}" height="10" style="flex:none;margin-right:11px"><path d="${k=='p'?'M1 1l5 4-5 4z':'M0 3h8l-4 4z'}" fill="#fff"/></svg>`+ic(k=='p'?'part':'mates',19)+gap(4):gap(49)+ic(k,19)+gap(5)}${t(end-tx,s,'color:inherit')}`});
def('feature-panel',()=>`<style>:host{display:flex;flex-direction:column;width:464px;height:867px;box-sizing:border-box;background:#484848;border-right:1px solid #777}
.top{flex:none;height:20px;box-sizing:border-box;border-bottom:1px solid #808080;border-top:1px solid #a5b0b4;margin-right:1px;display:flex;flex-direction:column;align-items:center}.top i{width:100%;height:3px;border-bottom:1px solid #808080}.dot{width:6px;height:6px;border-radius:50%;background:#ddd;border:1px solid #777;margin-top:3px}
.tabs{flex:none;display:flex;height:30px;padding-top:4px;box-sizing:border-box}.tabs div{box-sizing:border-box;width:40px;height:26px;background:#333;border:1px solid #808080;border-left:0;display:flex;justify-content:center;align-items:center}.tabs div:first-child{width:42px;background:#484848;border-bottom:0;padding-left:3px}.tabs em{flex:1;border-bottom:1px solid #808080;display:flex;align-items:center;justify-content:flex-end;padding-right:6px}
.f{flex:none;box-sizing:border-box;height:26px;margin:1px 4px 0 4px;background:#555;border:1px solid #858585;display:flex;align-items:center;padding-left:3px}
.b{display:flex;height:786px;border-left:1px solid #777;overflow:hidden}.rows{flex:1;overflow:hidden;margin-left:-1px}.sb{width:16px;flex:none;background:#f0f0f0;display:flex;flex-direction:column;align-items:center;height:786px}.th{width:16px;height:479px;background:#cdcdcd;margin-top:167px;flex:none}
.e{height:3px;border-bottom:1px solid #808080;display:flex;justify-content:center}</style>
<div class="top"><i></i><span class="dot"></span></div>
<div class="tabs">${['asm','tree1','tree2','target','ball','disp','cam','drill'].map(n=>`<div>${ic(n,n=='tree2'?18:19,20)}</div>`).join('')}<em><svg width="9" height="14"><path d="M1.500 2l5 5-5 5" fill="none" stroke="#111" stroke-width="2"/></svg></em></div>
<div class="f">${ic('filter',16,17)}${gap(2)}<drop-arrow style="margin-top:9px"></drop-arrow></div>
<div class="b"><div class="rows">${tree.map(r=>`<tree-row kind="${r[0]}" end="${r[2]}" label="${esc(r[1])}"></tree-row>`).join('')}</div><div class="sb"><svg width="10" height="7" style="margin-top:5px;flex:none"><path d="M1.500 6 5 2.500 8.500 6" stroke="#505050" stroke-width="2" fill="none"/></svg><div class="th"></div><svg width="10" height="7" style="margin-top:auto;margin-bottom:5px;flex:none"><path d="M1.500 1 5 4.500 8.500 1" stroke="#505050" stroke-width="2" fill="none"/></svg></div></div>
<div class="e"><svg width="8" height="3"><path d="M0 1.500h8" stroke="#ccc"/></svg></div>`);

def('model-view',()=>`<style>:host{display:block;overflow:hidden;background:linear-gradient(#808080,#407f7d)}svg{display:block}</style><svg width="1920" height="890" viewBox="0 116 1920 890">
<defs><linearGradient id="fade" gradientUnits="userSpaceOnUse" x1="1185" y1="800" x2="1310" y2="768"><stop offset="0" stop-color="#151f1f"/><stop offset="1" stop-color="#151f1f" stop-opacity="0"/></linearGradient><radialGradient id="hub" gradientUnits="userSpaceOnUse" cx="1021" cy="643" r="100"><stop offset=".78" stop-color="#017a79"/><stop offset="1" stop-color="#04a3a3"/></radialGradient><filter id="bl" x="-20%" y="-20%" width="140%" height="140%"><feGaussianBlur stdDeviation="3"/></filter><filter id="b2" x="-20%" y="-50%" width="140%" height="200%"><feGaussianBlur stdDeviation="1.200"/></filter><clipPath id="tc"><path id="tp" d="M1000 451 1062 442.500 1100 435.500Q1145 428 1166 459 1172 468 1176 482L1226 712Q1232 742 1213 770.500 1202 786 1172 795L1062 818.500 1000 828z"/></clipPath></defs>
<path d="M1225 757Q1270 747 1320 735 1270 743 1227 750z" fill="url(#fade)" opacity=".7" filter="url(#b2)"/><path d="M1050 810 1190 787Q1260 779 1325 765 1260 784 1195 797L1050 828z" fill="url(#fade)" filter="url(#b2)"/>
<path d="M945 222.800 1035 188.400 1109 173.200 1033.300 204.500z" fill="#f7f700"/><path d="M945 222.800 1033.300 204.500 1028 290H938z" fill="#efef08"/><path d="M1033.300 204.500 1109 173.500 1115 202 1045 230Q1040 232 1039.500 240L1037 290H1028z" fill="#9c9a00"/>
<path d="M1055 350 1076 439 1055 445z" fill="#6b3268"/>
<path d="M1062 440 1085 434Q1121 426 1146 435 1173 446 1181 480L1230.500 713Q1235 745 1213 772L1200 760 1160 460z" fill="#6d336b"/><path d="M1062 440 1085 434Q1121 427 1146 436 1158 441 1168 453" fill="none" stroke="#b54fb2" stroke-width="3"/><path d="M1178 482 1227 714Q1231 740 1214 771" fill="none" stroke="#b257b0" stroke-width="1.200"/>
<use href="#tp" fill="#04a3a3"/><g clip-path="url(#tc)"><path d="M1146 438Q1170 448 1176 484L1225 716Q1230 745 1207 772 1190 792 1062 820" fill="none" stroke="#015e5f" stroke-width="8" filter="url(#bl)"/><path d="M1062 448.500 1100 442Q1120 438 1135 441" fill="none" stroke="#19c4c4" stroke-width="2"/><path d="M1062 444.500 1100 438Q1120 434.500 1140 440" fill="none" stroke="#038b8c" stroke-width="1.500"/></g>
<circle cx="1021" cy="643" r="98" fill="url(#hub)"/><circle cx="1014" cy="647" r="77" fill="#04a3a3"/><path d="M1055 567Q1100 590 1103.500 643 1103 674 1084 699 1100 670 1100.500 643 1094 594 1055 571z" fill="#403a3a" stroke="#403a3a" stroke-width=".8"/><path d="M1061 638h2v16h-2z" fill="#00851f"/>
<g id="bo"><path d="M1075 462.500 1126.700 450 1160 485.300 1145.700 536 1096.700 547.800 1060 512z" fill="#929292"/><path d="M1075 462.500 1086 460 1069 484z" fill="#e4e4e4"/><ellipse cx="1109" cy="498" rx="45.500" ry="46" fill="#a3a3a3"/></g><use href="#bo" x="51" y="235.500"/>
<path d="M505 948 499 928" stroke="#1d7a1d" stroke-width="4"/><path d="M505 948 500 928" stroke="#b5d8ae" stroke-width="1.200"/><path d="M498.500 918 494.500 929.500 504 927.500z" fill="#127412"/><path d="M506 948 528 943" stroke="#1a1ab8" stroke-width="4"/><path d="M506 948 528 943" stroke="#b9b9f0" stroke-width="1.200"/><path d="M536 942 524 939.500 527 947.500z" fill="#1414c0"/><circle cx="505" cy="949" r="2.500" fill="#fff" stroke="#e88"/><path d="M508 941v3" stroke="#e22" stroke-width="1.500"/>
<text x="493" y="916" font-size="11" fill="#0a8a2c" font-family="Liberation Sans">Y</text><text x="533" y="944" font-size="11" fill="#1a1aff" font-family="Liberation Sans">Z</text></svg>`);
def('view-toolbar',()=>`<style>:host{display:flex;align-items:center;height:32px;color:#666}.on{flex:none;width:27px;height:27px;box-sizing:border-box;border:1px solid #333;background:#666;display:flex;align-items:center;justify-content:center}.eye{flex:none;display:flex;width:39px;height:26px;box-sizing:border-box;border:1px solid #6a6c70;background:#8c8d90}.eye b{width:26px;display:flex;align-items:center;justify-content:center}.eye u{flex:1;border:1px solid #eee;border-right:0;border-bottom:0;background:#7b7c7e}</style>
${row([[1016,18,ic('zfit',18)],[1041,19,ic('zarea',19)],[1068,19,ic('prev',19,18)],[1094,18,ic('sect',18)],[1116,27,`<div class="on">${ic('dyn',20)}</div>`],[1145,20,ic('orient',20)],[1187,17,ic('dstyle',17,19)],[1222,39,`<div class="eye"><b>${ic('eye',18,16)}</b><u></u></div>`],[1265,20,ic('app',20)],[1290,20,ic('scene',20)],[1332,19,ic('mon',19)],[1789,14,ic('dl',14)],[1815,14,ic('dr',14)],[1841,16,ic('min',16)],[1866,17,ic('rest',17,15)],[1893,15,ic('x',15)]],741)}`);
def('bottom-bar',()=>`<style>:host{display:block;background:#484848}.t{display:flex;height:16px;box-sizing:border-box;border-top:1px solid #808080;border-bottom:1px solid #808080;padding-left:2px;line-height:14px}.n{width:16px;height:14px;box-sizing:border-box;background:#a0a0a0;border:1px solid #c4c4c4;border-right-color:#666;border-bottom-color:#666;display:flex;align-items:center;justify-content:center}.k{box-sizing:border-box;border-right:1px solid #808080;background:#333;display:flex;justify-content:center;height:14px}.s{display:flex;height:18px;align-items:center;line-height:18px;padding-top:1px;box-sizing:border-box}</style>
<div class="t">${['M3 1v8M9 1 4 5l5 4z','M8 1 3 5l5 4z','M3 1l5 4-5 4z','M8 1v8M2 1l5 4-5 4z'].map(d=>`<div class="n"><svg width="11" height="10"><path d="${d}" fill="#777" stroke="#777"/></svg></div>`).join('')}<div class="k" style="width:58px;background:#484848;font-weight:700;padding-left:4px">${t(35,'Model')}</div><div class="k" style="width:68px">${t(48,'3D Views')}</div><div class="k" style="width:108px;padding-right:8px">${t(80,'Motion Study 1')}</div></div>
<div class="s">${row([[1,140,t(140,'Selection Filter commands')],[1511,76,t(76,'Under Defined')],[1605,91,t(91,'Editing Assembly')],[1724,16,ic('stat',16)],[1820,24,t(24,'MKS')],[1868,6,'<drop-arrow style="transform:rotate(180deg)"></drop-arrow>'],[1901,15,ic('tag',15,14)]])}</div>`);
def('task-bar',()=>`<style>:host{display:flex;height:40px;background:#1c1c1c;align-items:center}.q{flex:none;box-sizing:border-box;width:288px;height:40px;border:1px solid #555;background:#333;display:flex;align-items:center;padding-left:11px;color:#ccc}.a{flex:none;width:48px;height:40px;box-sizing:border-box;display:flex;flex-direction:column;align-items:center;padding-top:8px}.a i{width:40px;height:2px;background:#76b9ed;margin-top:6px}.sw{background:#4a4a4a}.a.sw i{width:48px}.pc{width:23px;height:23px;box-sizing:border-box;border:3px solid #c8e020;border-left-color:#35d86a;background:#000;color:#fff;font:700 9px/10px "Open Sans";padding:2px 1px}.swi{display:grid;width:26px;height:24px}.swi>*{grid-area:1/1}.swi div{text-align:center;color:#fff;font:800 11px/13px "Open Sans";padding-top:3px}.swi small{display:block;font:700 9px/9px "Open Sans"}</style>
${row([[16,16,ic('win',16)],[48,288,`<div class="q">${gap(1)}${ic('tmag',16)}${gap(12)}${t(127,'Type here to search','font-size:15px')}</div>`],[339,48,`<div class="a">${ic('chrome',24)}<i></i></div>`],[388,48,`<div class="a">${ic('edge',24)}</div>`],[436,48,`<div class="a">${ic('expl2',22,24)}</div>`],[486,48,`<div class="a">${ic('vsc',24)}</div>`],[535,48,`<div class="a">${ic('vs',24)}</div>`],[584,48,`<div class="a"><div class="pc">PC</div></div>`],[633,48,`<div class="a">${ic('onen',24)}</div>`],[682,48,`<div class="a">${ic('obs',20,24)}<i></i></div>`],[730,48,`<div class="a">${ic('npp',22,24)}</div>`],[780,48,`<div class="a sw"><div class="swi">${ic('swc',26,24)}<div>SW<small>2021</small></div></div><i></i></div>`],
[1692,13,'<svg width="13" height="9" style="flex:none"><path d="M1 8l5.500-6L12 8" fill="none" stroke="#fff" stroke-width="1.500"/></svg>'],[1715,16,ic('batt',16)],[1743,16,ic('pen',16)],[1773,23,t(23,'ENG')],[1811,47,`<div style="flex:none;width:47px;line-height:18px;display:flex;flex-direction:column;align-items:center">${t(43,'6:55 PM')}${t(47,'7/7/2024')}</div>`],[1879,16,ic('notif',16)],[1915,1,'<i style="flex:none;width:1px;height:40px;background:#666"></i>']])}`);

const F=[['ver','Vertices',69],['edg','Edges',60],['fac','Faces',58],['sur','Surface Bodies',106],['sol','Solid Bodies',93],['axe','Axes',54],['pla','Planes',63],['skp','Sketch Points',100],['ske','Sketches',75],['seg','Sketch Segments',119],['mid','Midpoints',83],['cen','Center Marks',99],['cli','Centerlines',88],['dim','Dimensions/Hole Callouts',167],['sfs','Surface Finish Symbols',150],['geo','Geometric Tolerances',142],['not','Notes/Balloons',110],['dat','Datum Features',112],['wel','Weld Symbols',104],['bea','Weld Beads',90],['dta','Datum Targets',105],['cos','Cosmetic Threads',123],['blo','Blocks',63],['dow','Dowel Pin Symbols',130],['con','Connection Points',127],['rou','Routing Points',107],['mfa','Mesh Facets',94],['med','Mesh Facet Edges',123],['mve','Mesh Facet Vertices',132]];
def('filter-menu',()=>`<style>:host{display:block;position:absolute;left:768px;top:281px;width:294px;height:759px;box-sizing:border-box;border:1px solid #a0a0a0;background:#484848;padding-top:2px;box-shadow:3px 3px 3px #0007}.r{display:flex;align-items:center;height:24px;padding-left:5px;line-height:23px}.r>:nth-child(2){margin-left:11px}.sel{width:20px;height:20px;margin:0 0 0 -2px;padding:1px;border:1px solid #333;background:#666}.sp{height:2px;background:#fff;margin:3px 3px 4px;border-top:1px solid #999;box-sizing:border-box}</style>
<div class="r">${ic('allf',20)}${t(82,'Select All Filters')}</div><div class="r"><div class="sel">${ic('cursor',19,19)}</div>${t(31,'Select','margin-left:9px')}</div><div class="sp"></div>${F.map(f=>`<div class="r">${ic(f[0],20)}${t(f[2],'Filter '+f[1])}</div>`).join('')}`);
const C=[['zfit','<u>Z</u>oom',24],['zarea','Z<u>o</u>om',24],['zio','Zoom',24],['rot','<u>R</u>otat',24],['pan','<u>P</u>an',24],['roll','Ro<u>l</u>l V',24],['','Rot<u>a</u>t',24],['scope','<u>V</u>iew',25],0,['scenep','<u>E</u>dit S',26],['hide','S<u>h</u>ow',26],0,['openp','Ope<u>n</u>',26],['temp','Temp',26],0,['','<u>R</u>ece',26]];
def('context-menu',()=>`<style>:host{display:block;position:absolute;left:704px;top:460px;width:64px}.tb,.m{box-sizing:border-box;border:1px solid #909090;border-right:0;background:#484848;box-shadow:4px 4px 3px #0006;overflow:hidden}.tb{height:39px;display:flex;align-items:center;padding-left:3px}.tb div{flex:none;box-sizing:border-box;width:30px;height:30px;border:1px solid #2a2a2a;background:#555;display:flex;align-items:center;justify-content:center;margin-right:5px}.m{margin-top:9px;height:358px;padding-top:3px}.r{display:flex;align-items:center;padding-left:7px;overflow:hidden;white-space:nowrap;letter-spacing:-.2px}.r span{margin-left:11px}.sp{height:1px;background:#808080;margin-left:31px;margin-bottom:-1px}u{text-underline-offset:2px}</style>
<div class="tb"><div>${ic('box',20)}</div>${ic('lasso',19,20)}</div><div class="m">${C.map(c=>c?`<div class="r" style="height:${c[2]}px">${c[0]?ic(c[0],19):gap(19)}<span>${c[1]}</span></div>`:'<div class="sp"></div>').join('')}</div>`);
def('task-pane',()=>`<style>:host{display:block;position:absolute;left:1895px;top:168px;width:25px;height:144px}.t{height:24px;box-sizing:border-box;border:1px solid #8a8a8a;border-right:0;background:#333;display:flex;align-items:center;padding-left:2px}.t:first-of-type{background:#aeaeae}</style>${['home','lib','folder','pal','ball','list'].map(n=>`<div class="t">${ic(n,18,19)}</div>`).join('')}`);
def('guard-widget',()=>`<style>:host{display:block;position:absolute;left:1872px;top:254px;width:43px;height:78px;border-radius:8px 8px 21px 21px;background:#222a39ee;box-shadow:0 2px 5px #0008}.s{display:flex;justify-content:center;padding:9px 1px 0 0}.c{margin-top:7px;height:43px;display:grid}.c>*{grid-area:1/1}.n{display:flex;align-items:baseline;justify-content:center;font:700 17px/43px "Open Sans";color:#fff}.n small{font-size:8px;color:#aaa}</style><div class="s">${ic('shield',17,18)}</div><div class="c"><svg width="43" height="43"><defs><linearGradient id="g" x2="0" y2="1"><stop stop-color="#f07b2a"/><stop offset=".5" stop-color="#d9c23c"/><stop offset="1" stop-color="#2cc5b0"/></linearGradient></defs><circle cx="21.500" cy="21.500" r="20.500" fill="#1d2332"/><path d="M10 7.500a18 18 0 1 0 23 0" fill="none" stroke="url(#g)" stroke-width="2.200"/></svg><div class="n">86<small>%</small></div></div>`);
def('panel-handle',()=>`<style>:host{display:flex;position:absolute;left:464px;top:542px;width:9px;height:39px;box-sizing:border-box;border:1px solid #777;border-left:0;background:#484848;align-items:center;justify-content:center}i{width:6px;height:6px;border-radius:50%;background:#ddd;border:1px solid #888;margin-top:-2px}</style><i></i>`);
def('sw-app',`<style>:host{display:grid;position:relative;width:1920px;height:1080px;overflow:hidden;grid-template-columns:464px 277px 1fr;grid-template-rows:34px 82px 23px 867px 34px 40px}title-bar,ribbon-bar,bottom-bar,task-bar{grid-column:1/4;min-width:0}model-view{grid-area:3/1/5/4}command-tabs{grid-area:3/1/4/3}view-toolbar{grid-area:3/3/4/4}feature-panel{grid-area:4/1}title-bar{grid-row:1}ribbon-bar{grid-row:2}bottom-bar{grid-row:5}task-bar{grid-row:6}</style>
<title-bar></title-bar><ribbon-bar></ribbon-bar><model-view></model-view><command-tabs></command-tabs><view-toolbar></view-toolbar><feature-panel></feature-panel><bottom-bar></bottom-bar><task-bar></task-bar><panel-handle></panel-handle><context-menu></context-menu><filter-menu></filter-menu><task-pane></task-pane><guard-widget></guard-widget>`);
</script>
</body>
</html>
